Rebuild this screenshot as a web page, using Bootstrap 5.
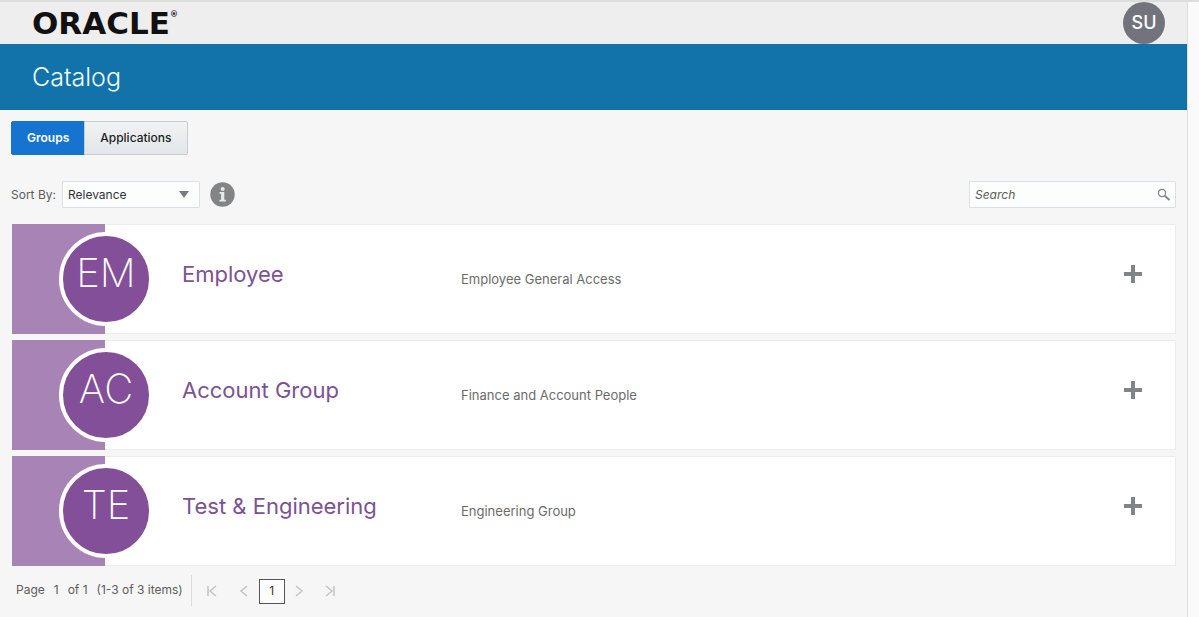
<!DOCTYPE html>
<html lang="en">
<head>
<meta charset="utf-8">
<meta name="viewport" content="width=device-width, initial-scale=1">
<title>Catalog</title>
<link href="https://cdn.jsdelivr.net/npm/bootstrap@5.3.0/dist/css/bootstrap.min.css" rel="stylesheet">
<style>
  body { font-family: Inter, "Liberation Sans", sans-serif; font-size: 12px; line-height: 16px; color: #5c5c5c; background: #fafafa; border-top: 2px solid #dcdddd; }
  svg { display: block; }
  .plain { border: 0; background: none; padding: 0; }
  .shell { min-height: calc(100vh - 2px); margin-right: 11px; background: #f6f6f6; border-right: 1px solid #dcdee0; }
  .topbar { height: 42px; padding: 0 22px 0 32px; background: #efeeef; }
  .brand { font-family: "DejaVu Sans", sans-serif; font-weight: 700; font-size: 31px; line-height: 42px; color: #111; }
  .brand sup { font-size: 8px; top: -17px; }
  .user { width: 42px; height: 42px; background: #73737d; color: #fff; font-size: 18px; font-weight: 500; }
  .titlebar { height: 66px; padding: 0 32px; background: #1173aa; color: #f2fbff; }
  .titlebar h1 { font-size: 25px; line-height: 32px; font-weight: 300; }
  .content { padding: 11px 11px 0; }
  .tabs .btn { font-size: 12px; line-height: 16px; font-weight: 500; height: 34px; border-radius: 2px; padding: 0 15px; }
  .tabs .btn.on { background: #1474cf; color: #fff; border-color: #1474cf; font-weight: 600; }
  .tabs .btn.off { background: linear-gradient(#f0f2f3, #e3e6e9); color: #1d1d1d; border-color: #c9cdd1; }
  .tools { margin: 26px 0 16px; }
  .tools label { margin-right: 6px; }
  .field { height: 27px; font-size: 12px; line-height: 16px; border: 1px solid #dce0e4; border-radius: 1px; background-color: #fcfdfd; color: #333; padding: 4px 5px; }
  .sort { width: 138px; background-image: url("data:image/svg+xml,%3Csvg xmlns='http://www.w3.org/2000/svg' viewBox='0 0 10 7'%3E%3Cpath fill='%23777c80' d='M0 0h10L5 7z'/%3E%3C/svg%3E"); background-size: 10px 7px; background-position: right 10px center; }
  .info { width: 25px; height: 25px; margin-left: 10px; }
  .finder { width: 207px; }
  .finder input { padding-right: 28px; }
  .finder input::placeholder { color: #5c5c5c; font-style: italic; opacity: 1; }
  .finder button { right: 5px; top: 7px; width: 14px; height: 14px; }
  .rows { gap: 6px; margin-left: 1px; }
  .entry { height: 110px; background: #fff; }
  .entry-end { border: 1px solid #ededee; border-left: 0; }
  .swatch { width: 93px; background: #a884b6; }
  .initials { width: 94px; height: 94px; margin-left: 47px; padding-bottom: 12px; border: 4px solid #fff; background: #834f99; color: #fff; font-size: 40px; line-height: 48px; font-weight: 200; }
  .entry h2 { width: 279px; margin-left: 77px; padding-bottom: 11px; font-size: 22px; line-height: 28px; font-weight: 400; color: #7b5293; }
  .entry p { font-size: 13px; color: #6b6b6b; }
  .add { margin-right: 33px; padding-bottom: 10px; }
  .pager { padding: 9px 0 10px 5px; }
  .pager .status { height: 31px; padding: 7px 8px 0 0; border-right: 1px solid #dcdcdc; gap: 9px; }
  .pager .steps { margin: 1px 0 0 7px; }
  .pager .step { width: 30px; height: 24px; color: #c4c4c4; }
  .pager .current { width: 26px; height: 25px; border: 1px solid #555; color: #333; background: #fcfcfc; font-size: 12px; }
</style>
</head>
<body>
<div class="shell">
  <header>
    <div class="topbar d-flex justify-content-between align-items-center">
      <a class="brand text-decoration-none" href="#">ORACLE<sup>®</sup></a>
      <button class="user plain rounded-circle" type="button">SU</button>
    </div>
    <div class="titlebar d-flex align-items-center"><h1 class="m-0">Catalog</h1></div>
  </header>
  <main class="content">
    <div class="tabs btn-group" role="group" aria-label="Catalog type">
      <button type="button" class="btn on">Groups</button>
      <button type="button" class="btn off">Applications</button>
    </div>
    <div class="tools d-flex align-items-center">
      <label for="sort">Sort By:</label>
      <select id="sort" class="form-select field sort"><option>Relevance</option></select>
      <button type="button" class="plain info" aria-label="Information">
        <svg width="25" height="25" viewBox="0 0 25 25"><circle cx="12.500" cy="12.500" r="12.200" fill="#828486"/><circle cx="12.700" cy="6.900" r="2" fill="#e8e9e9"/><path d="M9.500 10h4.800v7.700h1.500V19.500H9.500v-1.800h1.600v-5.900H9.500z" fill="#e8e9e9"/></svg>
      </button>
      <div class="finder position-relative ms-auto">
        <input type="search" class="form-control field" placeholder="Search" aria-label="Search">
        <button type="button" class="plain position-absolute" aria-label="Run search">
          <svg width="14" height="14" viewBox="0 0 14 14" fill="none" stroke="#83878a"><circle cx="5" cy="5" r="3.600" stroke-width="1.200"/><path d="M7.700 7.700l4.800 4.300" stroke-width="2"/></svg>
        </button>
      </div>
    </div>
    <div class="rows d-flex flex-column">
      <section class="entry d-flex">
        <div class="swatch d-flex align-items-center flex-shrink-0"><div class="initials rounded-circle d-flex align-items-center justify-content-center flex-shrink-0">EM</div></div>
        <div class="entry-end d-flex align-items-center flex-fill">
          <h2 class="mb-0 flex-shrink-0">Employee</h2><p class="mb-0">Employee General Access</p>
          <button type="button" class="plain add ms-auto" aria-label="Add Employee"><svg width="18" height="18" viewBox="0 0 18 18"><path d="M7 0h4v7h7v4h-7v7H7v-7H0V7h7z" fill="#808588"/></svg></button>
        </div>
      </section>
      <section class="entry d-flex">
        <div class="swatch d-flex align-items-center flex-shrink-0"><div class="initials rounded-circle d-flex align-items-center justify-content-center flex-shrink-0">AC</div></div>
        <div class="entry-end d-flex align-items-center flex-fill">
          <h2 class="mb-0 flex-shrink-0">Account Group</h2><p class="mb-0">Finance and Account People</p>
          <button type="button" class="plain add ms-auto" aria-label="Add Account Group"><svg width="18" height="18" viewBox="0 0 18 18"><path d="M7 0h4v7h7v4h-7v7H7v-7H0V7h7z" fill="#808588"/></svg></button>
        </div>
      </section>
      <section class="entry d-flex">
        <div class="swatch d-flex align-items-center flex-shrink-0"><div class="initials rounded-circle d-flex align-items-center justify-content-center flex-shrink-0">TE</div></div>
        <div class="entry-end d-flex align-items-center flex-fill">
          <h2 class="mb-0 flex-shrink-0">Test &amp; Engineering</h2><p class="mb-0">Engineering Group</p>
          <button type="button" class="plain add ms-auto" aria-label="Add Test &amp; Engineering"><svg width="18" height="18" viewBox="0 0 18 18"><path d="M7 0h4v7h7v4h-7v7H7v-7H0V7h7z" fill="#808588"/></svg></button>
        </div>
      </section>
    </div>
    <nav class="pager d-flex align-items-center" aria-label="Pages">
      <div class="status d-flex"><span>Page</span><span>1</span><span>of 1</span><span>(1-3 of 3 items)</span></div>
      <div class="steps d-flex align-items-center">
        <button type="button" class="plain step" aria-label="First page" disabled><svg class="w-100" height="24" viewBox="0 0 30 24" fill="none" stroke="currentColor" stroke-width="1.500"><path d="M9 7v10M17 7l-6 5 6 5"/></svg></button>
        <button type="button" class="plain step" aria-label="Previous page" disabled><svg class="w-100" height="24" viewBox="0 0 30 24" fill="none" stroke="currentColor" stroke-width="1.500"><path d="M18 7l-6 5 6 5"/></svg></button>
        <button type="button" class="plain current">1</button>
        <button type="button" class="plain step" aria-label="Next page" disabled><svg class="w-100" height="24" viewBox="0 0 30 24" fill="none" stroke="currentColor" stroke-width="1.500"><path d="M11 7l6 5-6 5"/></svg></button>
        <button type="button" class="plain step" aria-label="Last page" disabled><svg class="w-100" height="24" viewBox="0 0 30 24" fill="none" stroke="currentColor" stroke-width="1.500"><path d="M11 7l6 5-6 5M19 7v10"/></svg></button>
      </div>
    </nav>
  </main>
</div>
<script src="https://cdn.jsdelivr.net/npm/bootstrap@5.3.0/dist/js/bootstrap.bundle.min.js"></script>
</body>
</html>
